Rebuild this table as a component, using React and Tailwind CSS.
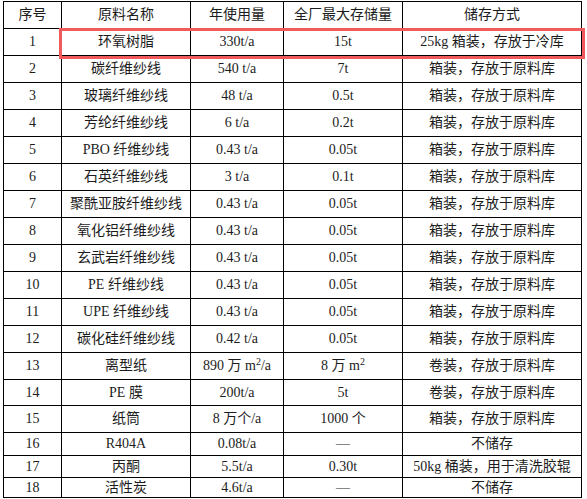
import React from "react";

const rows = [
  ["1", "环氧树脂", "330t/a", "15t", "25kg 箱装，存放于冷库", 27],
  ["2", "碳纤维纱线", "540 t/a", "7t", "箱装，存放于原料库", 27],
  ["3", "玻璃纤维纱线", "48 t/a", "0.5t", "箱装，存放于原料库", 27],
  ["4", "芳纶纤维纱线", "6 t/a", "0.2t", "箱装，存放于原料库", 27],
  ["5", "PBO 纤维纱线", "0.43 t/a", "0.05t", "箱装，存放于原料库", 27],
  ["6", "石英纤维纱线", "3 t/a", "0.1t", "箱装，存放于原料库", 27],
  ["7", "聚酰亚胺纤维纱线", "0.43 t/a", "0.05t", "箱装，存放于原料库", 27],
  ["8", "氧化铝纤维纱线", "0.43 t/a", "0.05t", "箱装，存放于原料库", 27],
  ["9", "玄武岩纤维纱线", "0.43 t/a", "0.05t", "箱装，存放于原料库", 27],
  ["10", "PE 纤维纱线", "0.43 t/a", "0.05t", "箱装，存放于原料库", 27],
  ["11", "UPE 纤维纱线", "0.43 t/a", "0.05t", "箱装，存放于原料库", 27],
  ["12", "碳化硅纤维纱线", "0.42 t/a", "0.05t", "箱装，存放于原料库", 27],
  ["13", "离型纸", "m2a", "m2", "卷装，存放于原料库", 27],
  ["14", "PE 膜", "200t/a", "5t", "卷装，存放于原料库", 26],
  ["15", "纸筒", "8 万个/a", "1000 个", "箱装，存放于原料库", 27],
  ["16", "R404A", "0.08t/a", "—", "不储存", 23],
  ["17", "丙酮", "5.5t/a", "0.30t", "50kg 桶装，用于清洗胶辊", 22],
  ["18", "活性炭", "4.6t/a", "—", "不储存", 20],
];

function Cell({ value }) {
  if (value === "m2a") {
    return (
      <>
        890 万 m<sup className="text-[10px]">2</sup>/a
      </>
    );
  }
  if (value === "m2") {
    return (
      <>
        8 万 m<sup className="text-[10px]">2</sup>
      </>
    );
  }
  return value;
}

export default function App() {
  return (
    <div
      className="relative bg-white w-[587px] h-[499px] text-[#1c1c1c] text-[14px]"
      style={{ fontFamily: '"Liberation Serif", "Noto Sans CJK SC", serif' }}
    >
      <table className="table-fixed border-collapse ml-[3px] mt-[1px] w-[579px]">
        <colgroup>
          <col className="w-[58px]" />
          <col className="w-[129px]" />
          <col className="w-[93px]" />
          <col className="w-[119px]" />
          <col className="w-[179px]" />
        </colgroup>
        <thead>
          <tr className="h-[27px]">
            {["序号", "原料名称", "年使用量", "全厂最大存储量", "储存方式"].map((h) => (
              <th key={h} className="border border-black font-normal text-center p-0 leading-none">
                {h}
              </th>
            ))}
          </tr>
        </thead>
        <tbody>
          {rows.map((r) => (
            <tr key={r[0]} style={{ height: r[5] }}>
              {r.slice(0, 5).map((v, i) => (
                <td key={i} className="border border-black text-center p-0 leading-none whitespace-nowrap">
                  <Cell value={v} />
                </td>
              ))}
            </tr>
          ))}
        </tbody>
      </table>
      {/* highlight round row 1 */}
      <div className="absolute left-[59px] top-[27px] w-[526px] h-[31px] border-[3px] border-[#f15b5b]" />
    </div>
  );
}
